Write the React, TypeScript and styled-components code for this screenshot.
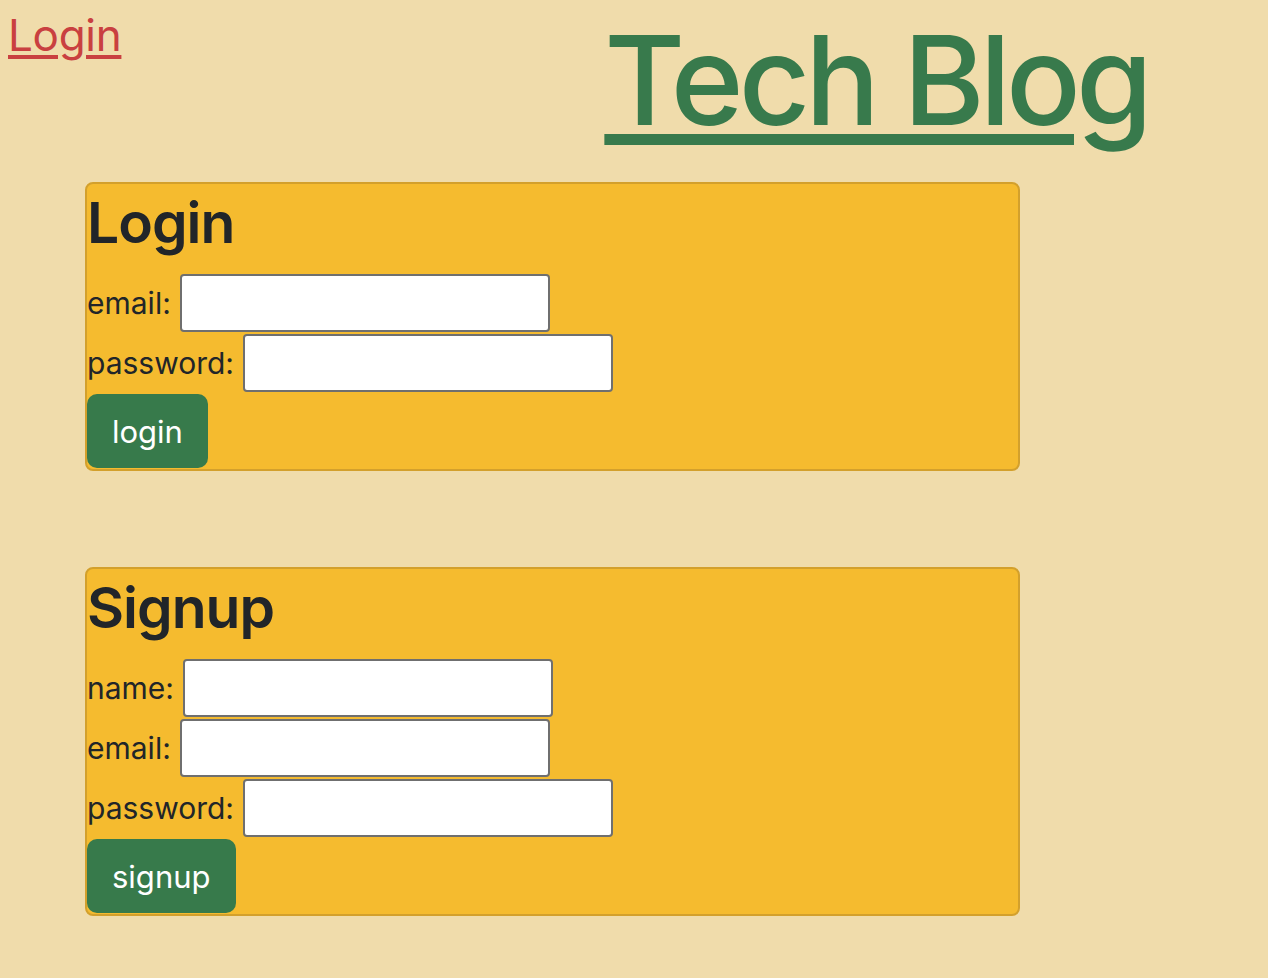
import React from "react";
import styled, { createGlobalStyle } from "styled-components";

const Global = createGlobalStyle`
  html, body { margin: 0; padding: 0; }
  body {
    background: #f0dcab;
    font-family: Inter, "Noto Sans", sans-serif;
    color: #212529;
    min-height: 978px;
  }
  * { box-sizing: border-box; }
`;

const Header = styled.header`
  display: flex;
  align-items: flex-start;
  padding: 0 0 0 8px;
  height: 182px;
`;

const NavLink = styled.a`
  color: #c94040;
  font-size: 44px;
  line-height: 1;
  text-decoration: underline;
  text-decoration-thickness: 4px;
  text-underline-offset: 4px;
  margin-top: 13px;
  letter-spacing: -0.3px;
`;

const Title = styled.a`
  color: #387a4c;
  font-size: 124px;
  font-weight: 500;
  line-height: 1;
  text-decoration: underline;
  text-decoration-thickness: 11px;
  text-underline-offset: 9px;
  margin-left: auto;
  margin-right: 120px;
  margin-top: 18px;
  letter-spacing: -4.9px;
`;

const Main = styled.main`
  display: flex;
  flex-direction: column;
  gap: 96px;
  padding-left: 85px;
`;

const Card = styled.form`
  width: 935px;
  background: #f5bb2f;
  border: 2px solid #d3a02c;
  border-radius: 8px;
  display: flex;
  flex-direction: column;
  align-items: flex-start;
  gap: 2px;
  padding: 0 0 1px 0;
`;

const Heading = styled.h2`
  margin: 0;
  font-size: 57px;
  font-weight: 600;
  line-height: 78px;
  height: 88px;
  letter-spacing: -1px;
`;

const Row = styled.label`
  display: flex;
  align-items: center;
  gap: 9px;
  font-size: 30px;
  height: 58px;
`;

const Input = styled.input`
  width: 370px;
  height: 58px;
  border: 2px solid #6f6f6f;
  border-radius: 4px;
  background: #fff;
  font-size: 24px;
`;

const Button = styled.button`
  height: 74px;
  padding: 0 25px;
  background: #377a4b;
  color: #fff;
  border: none;
  border-radius: 10px;
  font-family: inherit;
  font-size: 31px;
`;

const fields = {
  login: ["email", "password"],
  signup: ["name", "email", "password"],
};

export default function App() {
  return (
    <>
      <Global />
      <Header>
        <NavLink href="#">Login</NavLink>
        <Title href="#">Tech Blog</Title>
      </Header>
      <Main>
        <Card onSubmit={(e) => e.preventDefault()}>
          <Heading>Login</Heading>
          {fields.login.map((f) => (
            <Row key={f}>
              {f}:
              <Input type={f === "password" ? "password" : "text"} />
            </Row>
          ))}
          <Button type="submit">login</Button>
        </Card>
        <Card onSubmit={(e) => e.preventDefault()}>
          <Heading>Signup</Heading>
          {fields.signup.map((f) => (
            <Row key={f}>
              {f}:
              <Input type={f === "password" ? "password" : "text"} />
            </Row>
          ))}
          <Button type="submit">signup</Button>
        </Card>
      </Main>
    </>
  );
}
